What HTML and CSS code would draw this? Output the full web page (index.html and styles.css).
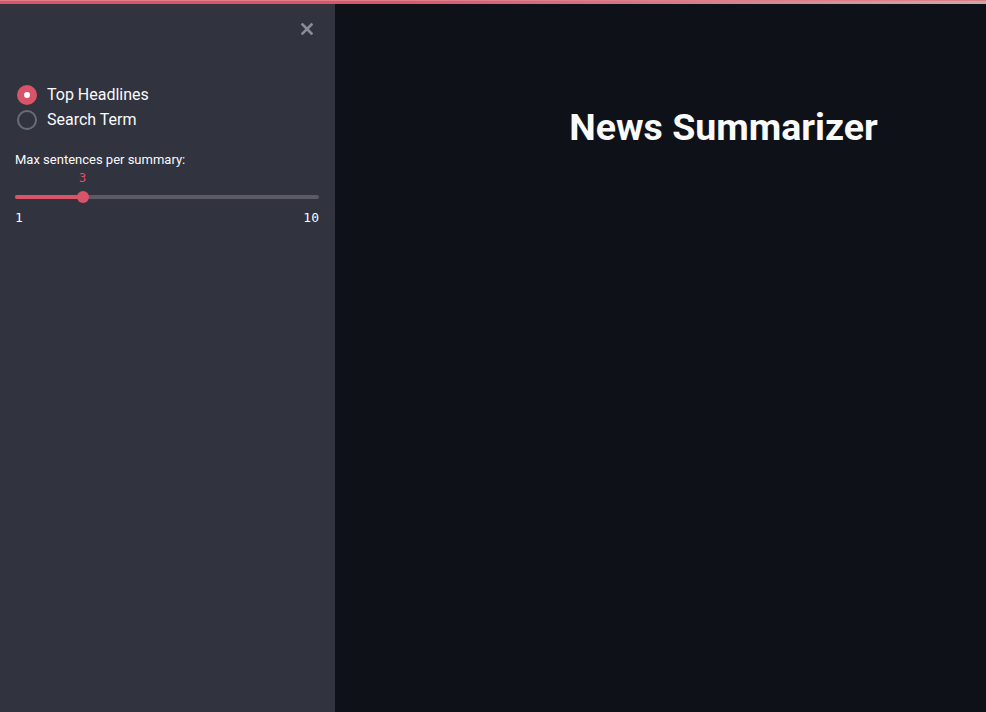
FILE: index.html
```html
<!DOCTYPE html>
<html lang="en">
<head>
<meta charset="utf-8">
<title>News Summarizer</title>
<link rel="stylesheet" href="styles.css">
</head>
<body>
<div class="decoration"></div>
<div class="app">
  <aside class="sidebar">
    <div class="close-row">
      <svg class="close" width="12" height="12" viewBox="0 0 12 12" aria-hidden="true">
        <path d="M1.5 1.5 L10.5 10.5 M10.5 1.5 L1.5 10.5" stroke="#8b8d95" stroke-width="2.6" stroke-linecap="square"/>
      </svg>
    </div>
    <div class="radio-group">
      <div class="radio-item">
        <span class="radio checked"><span class="dot"></span></span>
        <span class="radio-label">Top Headlines</span>
      </div>
      <div class="radio-item">
        <span class="radio"></span>
        <span class="radio-label">Search Term</span>
      </div>
    </div>
    <div class="slider-block">
      <div class="slider-label">Max sentences per summary:</div>
      <div class="slider-area">
        <div class="track">
          <div class="fill" style="width:22.22%"></div>
          <div class="thumb" style="left:22.22%">
            <span class="thumb-value">3</span>
          </div>
        </div>
      </div>
      <div class="range-labels">
        <span>1</span>
        <span>10</span>
      </div>
    </div>
  </aside>
  <main class="main">
    <h1 class="title">News Summarizer</h1>
  </main>
</div>
</body>
</html>
```
FILE: styles.css
```css
* { box-sizing: border-box; }
html, body {
  margin: 0;
  padding: 0;
  height: 100%;
}
body {
  background: #0e1117;
  color: #fafafa;
  font-family: Roboto, "Noto Sans", "Liberation Sans", sans-serif;
  display: flex;
  flex-direction: column;
  overflow: hidden;
}
.decoration {
  height: 4px;
  flex: none;
  background: linear-gradient(90deg, #d9566a 0%, #d9566a 40%, #d27280 60%, #c9aca0 100%);
  border-top: 1px solid #e07f8c;
}
.app {
  flex: 1;
  display: flex;
  min-height: 0;
}
.sidebar {
  width: 335px;
  flex: none;
  background: #31333f;
  padding: 19px 16px 0 15px;
  display: flex;
  flex-direction: column;
}
.close-row {
  display: flex;
  justify-content: flex-end;
  padding-right: 6px;
  height: 12px;
}
.close { display: block; }
.radio-group {
  margin-top: 47px;
  display: flex;
  flex-direction: column;
}
.radio-item {
  height: 25px;
  display: flex;
  align-items: center;
  gap: 10px;
  padding-left: 2px;
}
.radio {
  width: 20px;
  height: 20px;
  border-radius: 50%;
  border: 2px solid #6b6d76;
  background: #31333f;
  display: flex;
  align-items: center;
  justify-content: center;
  flex: none;
}
.radio.checked {
  border: none;
  background: #d95468;
}
.dot {
  width: 6px;
  height: 6px;
  border-radius: 50%;
  background: #ffffff;
}
.radio-label {
  font-size: 16px;
  line-height: 20px;
  color: #fafafa;
}
.slider-block {
  margin-top: 18px;
}
.slider-label {
  font-size: 13px;
  line-height: 20px;
  color: #fafafa;
}
.slider-area {
  padding-top: 25px;
}
.track {
  position: relative;
  height: 4px;
  border-radius: 2px;
  background: #5a5b66;
}
.fill {
  height: 4px;
  border-radius: 2px;
  background: #d95468;
}
.thumb {
  position: absolute;
  top: -4px;
  width: 12px;
  height: 12px;
  margin-left: -6px;
  border-radius: 50%;
  background: #d95468;
}
.thumb-value {
  position: absolute;
  left: 50%;
  transform: translateX(-50%);
  top: -21px;
  font-family: "DejaVu Sans Mono", "Liberation Mono", monospace;
  font-size: 12px;
  line-height: 16px;
  color: #d95468;
}
.range-labels {
  margin-top: 11px;
  display: flex;
  justify-content: space-between;
  font-family: "DejaVu Sans Mono", "Liberation Mono", monospace;
  font-size: 13px;
  line-height: 16px;
  color: #fafafa;
}
.main {
  flex: 1;
  padding: 99px 0 0 126px;
  display: flex;
  justify-content: center;
  align-items: flex-start;
}
.title {
  margin: 0;
  font-size: 37.5px;
  line-height: 48px;
  font-weight: 700;
  color: #fafafa;
  text-align: center;
}
```
